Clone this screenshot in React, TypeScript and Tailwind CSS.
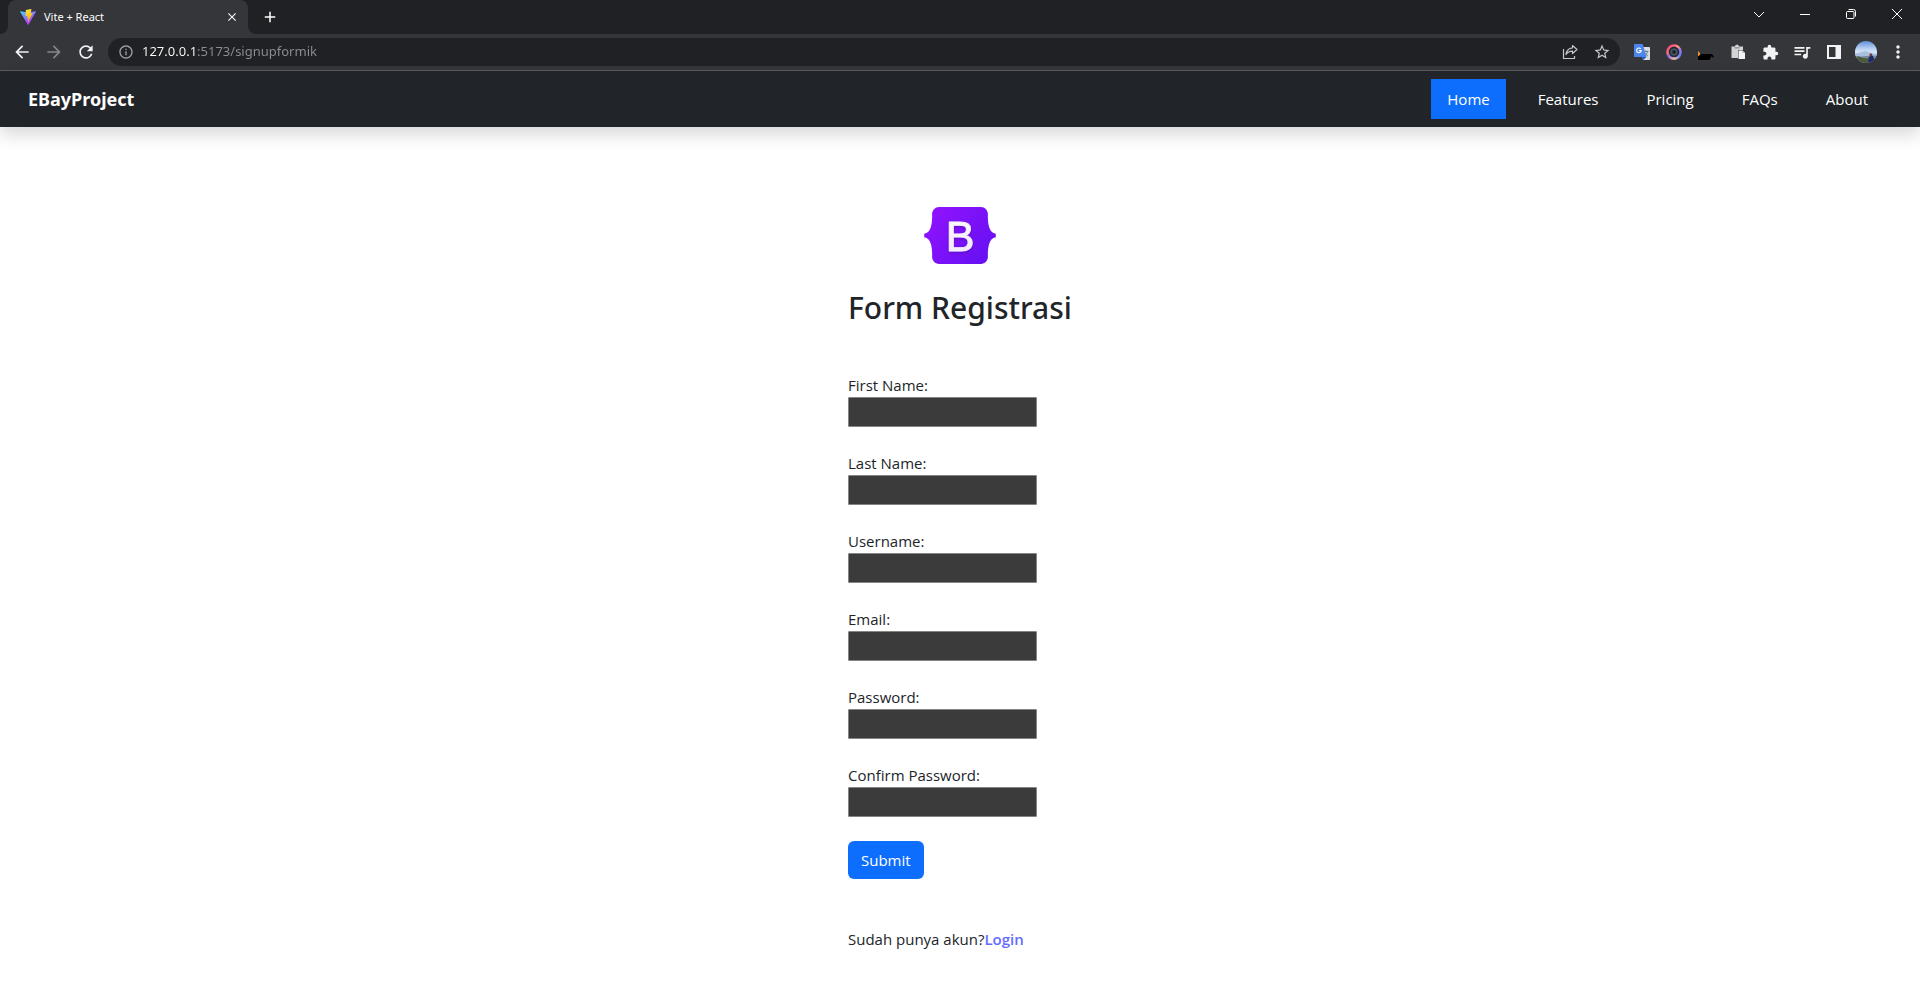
import type { ReactNode } from "react";
import {
  MdAdd,
  MdArrowBack,
  MdArrowForward,
  MdClose,
  MdExtension,
  MdInfoOutline,
  MdMoreVert,
  MdQueueMusic,
  MdRefresh,
  MdStarBorder,
} from "react-icons/md";

function ViteLogo() {
  return (
    <svg viewBox="0 0 32 32" className="size-4 shrink-0" aria-hidden="true">
      <defs>
        <linearGradient id="vite-a" x1="0" y1="0.05" x2="0.6" y2="0.9">
          <stop offset="0" stopColor="#41d1ff" />
          <stop offset="1" stopColor="#bd34fe" />
        </linearGradient>
        <linearGradient id="vite-b" x1="0.4" y1="0" x2="0.6" y2="1">
          <stop offset="0" stopColor="#ffea83" />
          <stop offset="0.1" stopColor="#ffdd35" />
          <stop offset="1" stopColor="#ffa800" />
        </linearGradient>
      </defs>
      <path d="M31.8 5.5 17 31.6c-.3.5-1 .5-1.3 0L.2 5.5c-.3-.6.2-1.3.8-1.2l15 2.7 15-2.7c.7-.1 1.1.6.8 1.2z" fill="url(#vite-a)" />
      <path d="M22.5 0 12 2.1c-.2 0-.3.2-.3.4l-.7 11.4c0 .3.2.5.5.4l3-.7c.3-.1.5.2.5.5l-.9 4.4c-.1.3.2.5.5.5l1.800-.6c.3-.1.6.2.5.5l-1.400 6.900c-.1.4.5.7.8.3l8.700-17.300c.1-.3-.1-.6-.5-.5l-3 .6c-.3.1-.5-.2-.5-.5l2-6.900c.1-.3-.2-.6-.5-.5z" fill="url(#vite-b)" />
    </svg>
  );
}

function BootstrapLogo() {
  return (
    <svg viewBox="0 0 118 94" className="h-[57px] w-[72px]" role="img" aria-label="Bootstrap">
      <defs>
        <linearGradient id="bs-bg" x1="10" y1="5" x2="108" y2="90" gradientUnits="userSpaceOnUse">
          <stop stopColor="#9013fe" />
          <stop offset="1" stopColor="#6610f2" />
        </linearGradient>
        <linearGradient id="bs-letter" x1="0" y1="0" x2="0" y2="1">
          <stop stopColor="#ffffff" />
          <stop offset="1" stopColor="#f1e5fc" />
        </linearGradient>
        <filter id="bs-shadow" x="-20%" y="-20%" width="140%" height="150%">
          <feDropShadow dx="0" dy="2" stdDeviation="3" floodOpacity="0.2" />
        </filter>
      </defs>
      <path
        fill="url(#bs-bg)"
        d="M24.509 0c-6.733 0-11.715 5.893-11.492 12.284.214 6.14-.064 14.092-2.066 20.577C8.943 39.365 5.547 43.485 0 44.014v5.972c5.547.529 8.943 4.649 10.951 11.153 2.002 6.485 2.28 14.437 2.066 20.577C12.794 88.106 17.776 94 24.51 94H93.5c6.733 0 11.714-5.893 11.491-12.284-.214-6.14.064-14.092 2.066-20.577 2.009-6.504 5.396-10.624 10.943-11.153v-5.972c-5.547-.529-8.934-4.649-10.943-11.153-2.002-6.484-2.28-14.437-2.066-20.577C105.214 5.894 100.233 0 93.5 0H24.508z"
      />
      <text x="59" y="72.500" textAnchor="middle" fontFamily="Liberation Sans, sans-serif" fontWeight="400" fontSize="71" stroke="#f8f2fe" strokeWidth="1.500" fill="url(#bs-letter)" filter="url(#bs-shadow)">
        B
      </text>
    </svg>
  );
}

function ShareIcon() {
  return (
    <svg viewBox="0 0 16 16" className="size-4" fill="none" stroke="currentColor" strokeWidth="1.2" aria-hidden="true">
      <path d="M1.500 5v9.500h11V12" />
      <path d="M10.500 1.500 15 5.500l-4.500 4V7.200C7.500 7.200 5.500 8.200 4 10.500 4.500 6.500 7 4.200 10.500 3.800z" strokeLinejoin="round" />
    </svg>
  );
}

function TranslateIcon() {
  return (
    <svg viewBox="0 0 16 16" className="size-4" aria-hidden="true">
      <path d="M6 3h9.300c.4 0 .7.3.7.7v11.600c0 .4-.3.7-.7.7H9z" fill="#dadce0" />
      <path d="M9.500 7.500h5M12 6.200v1.300M13.600 7.500c-.4 2-1.700 3.500-3.300 4.500M10.800 8.800c.6 1.400 1.800 2.500 3.200 3.300" stroke="#5f7886" strokeWidth="0.9" fill="none" />
      <path d="M.7 0h8l3.800 13H.7a.7.7 0 0 1-.7-.7V.7C0 .3.300 0 .7 0z" fill="#4a86ee" />
      <path d="M12.500 13 9 16l-.8-3z" fill="#1a56c4" />
      <path d="M6.700 4.900a2.300 2.300 0 1 0 .5 1.700H4.900" stroke="#fff" strokeWidth="1.100" fill="none" />
    </svg>
  );
}

function LensIcon() {
  return (
    <svg viewBox="0 0 16 16" className="size-4" aria-hidden="true">
      <defs>
        <linearGradient id="lens" x1="0" y1="0" x2="1" y2="1">
          <stop offset="0" stopColor="#ff2e84" />
          <stop offset="0.45" stopColor="#ff9a7a" />
          <stop offset="0.6" stopColor="#b07bf0" />
          <stop offset="1" stopColor="#4f7dff" />
        </linearGradient>
        <linearGradient id="lens-low" x1="0" y1="0" x2="1" y2="0">
          <stop offset="0" stopColor="#7d5cff" />
          <stop offset="0.5" stopColor="#ffc08a" />
          <stop offset="1" stopColor="#5b7cff" />
        </linearGradient>
      </defs>
      <circle cx="8" cy="8" r="6.600" fill="#26292f" stroke="url(#lens)" strokeWidth="2.400" />
      <path d="M1.800 10.300a6.600 6.600 0 0 0 12.400 0" fill="none" stroke="url(#lens-low)" strokeWidth="2.400" />
      <circle cx="8" cy="8" r="3.200" fill="#33424f" stroke="#5a6a78" strokeWidth="0.800" />
      <circle cx="8" cy="8" r="1.300" fill="#12171c" />
    </svg>
  );
}

function CatIcon() {
  return (
    <svg viewBox="0 0 16 16" className="size-4" aria-hidden="true">
      <path d="M0 7l1.500 1.500L3 12l-3 3z" fill="#f0932b" />
      <path d="M0 12.500 3 10h10c1.500 0 2.500 1.500 3 3.500l-1 .3c-.5-1-1-1.500-1.800-1.300L11.500 16H0z" fill="#000" />
    </svg>
  );
}

function PasteIcon() {
  return (
    <svg viewBox="0 0 16 16" className="size-4" aria-hidden="true">
      <path d="M1.500 2.500H5C5.200 1.200 5.900.8 7 .8s1.800.4 2 1.700h4V6H8v8H1.500z" fill="#d3d4d6" />
      <path d="M4.500 3.200h5v1.300h-5z" fill="#8b8c90" />
      <path d="M8.500 6.500h4l2.500 2.500v6H8.500z" fill="#f1f3f4" />
      <path d="M12.500 6.500V9H15z" fill="#b5b6b9" />
    </svg>
  );
}

function PanelIcon() {
  return (
    <svg viewBox="0 0 14 14" className="size-3.5" aria-hidden="true">
      <path fillRule="evenodd" d="M0 0h14v14H0zM2 2v10h6.500V2z" fill="#f1f3f4" />
    </svg>
  );
}

function Avatar() {
  return (
    <svg viewBox="0 0 22 22" className="size-[22px]" aria-hidden="true">
      <defs>
        <clipPath id="avatar-clip">
          <circle cx="11" cy="11" r="11" />
        </clipPath>
        <linearGradient id="avatar-sky" x1="0" y1="0" x2="0" y2="1">
          <stop offset="0" stopColor="#5f8fdc" />
          <stop offset="0.35" stopColor="#b9d2f3" />
          <stop offset="0.6" stopColor="#e6eef8" />
          <stop offset="1" stopColor="#8fa6c4" />
        </linearGradient>
      </defs>
      <g clipPath="url(#avatar-clip)">
        <path d="M0 0h22v22H0z" fill="url(#avatar-sky)" />
        <path d="M0 12.500l5-1 5-1.500 5 1.500 7 1.500v4H0z" fill="#a9c0df" />
        <path d="M0 15l6 .5 6-.5 10-.5v8H0z" fill="#75879a" />
        <path d="M0 16l4-.5 4 1.500 5 .5v5H0z" fill="#4b5b3a" />
        <path d="M13 22l.5-5 2-3 2 .5 1.500 3 1 4.500z" fill="#1e2a63" />
        <circle cx="15.800" cy="14" r="1.400" fill="#6b3a35" />
      </g>
    </svg>
  );
}

function TabFlare({ side }: { side: "left" | "right" }) {
  return (
    <svg viewBox="0 0 8 8" className="size-2 self-end" aria-hidden="true">
      <path d={side === "left" ? "M8 0v8H0a8 8 0 0 0 8-8z" : "M0 0v8h8a8 8 0 0 1-8-8z"} fill="#35363a" />
    </svg>
  );
}

function IconButton({ label, children }: { label: string; children: ReactNode }) {
  return (
    <button type="button" aria-label={label} className="flex h-7 w-8 shrink-0 items-center justify-center">
      {children}
    </button>
  );
}

function WindowButton({ label, path }: { label: string; path: string }) {
  return (
    <button type="button" aria-label={label} className="flex h-7 w-[46px] items-center justify-center text-white">
      <svg viewBox="0 0 10 10" className="size-2.5 overflow-visible" fill="none" stroke="currentColor" strokeWidth="1" aria-hidden="true">
        <path d={path} />
      </svg>
    </button>
  );
}

function BrowserChrome() {
  return (
    <header className="font-['Noto_Sans','Open_Sans',sans-serif]">
      <div className="flex h-[34px] items-start bg-[#202124]">
        <TabFlare side="left" />
        <div className="flex h-full w-60 items-center rounded-t-lg bg-[#35363a] pr-2 pl-3">
          <ViteLogo />
          <span className="ml-2 flex-1 text-[11px] text-white">Vite + React</span>
          <button type="button" aria-label="Close tab" className="flex size-4 items-center justify-center text-[#f1f3f4]">
            <MdClose className="size-3.5" />
          </button>
        </div>
        <TabFlare side="right" />
        <button type="button" aria-label="New tab" className="flex h-full w-7 items-center justify-center text-white">
          <MdAdd className="size-[18px]" />
        </button>
        <div className="ml-auto flex">
          <WindowButton label="Search tabs" path="M0 3l5 5 5-5" />
          <WindowButton label="Minimize" path="M0 5.500h10" />
          <WindowButton label="Restore" path="M1.500 2.500h5.500a1 1 0 0 1 1 1v5a1 1 0 0 1-1 1h-5.500a1 1 0 0 1-1-1v-5a1 1 0 0 1 1-1zM2.500.5h5a2 2 0 0 1 2 2v5" />
          <WindowButton label="Close window" path="M0 0l10 10M10 0L0 10" />
        </div>
      </div>

      <div className="flex items-center border-b border-[#5b5c60] bg-[#35363a] px-1.5 py-1 text-[#f1f3f4]">
        <IconButton label="Back"><MdArrowBack className="size-5" /></IconButton>
        <IconButton label="Forward"><MdArrowForward className="size-5 text-[#85868a]" /></IconButton>
        <IconButton label="Reload"><MdRefresh className="size-5" /></IconButton>
        <div className="mx-1.5 flex h-7 flex-1 items-center rounded-full bg-[#202124] pr-0.5 pl-2.5">
          <MdInfoOutline className="size-4 shrink-0 text-[#9aa0a6]" />
          <input
            aria-label="Address"
            defaultValue="127.0.0.1:5173/signupformik"
            className="ml-2 min-w-0 flex-1 bg-[linear-gradient(to_right,#ffffff_54px,#8b8e92_54px)] bg-clip-text text-[13px] text-transparent outline-none"
          />
          <div className="flex text-[#c4c7ca]">
            <IconButton label="Share"><ShareIcon /></IconButton>
            <IconButton label="Bookmark"><MdStarBorder className="size-[18px]" /></IconButton>
          </div>
        </div>
        <IconButton label="Translate"><TranslateIcon /></IconButton>
        <IconButton label="Screen capture"><LensIcon /></IconButton>
        <IconButton label="Cat extension"><CatIcon /></IconButton>
        <IconButton label="Clipboard"><PasteIcon /></IconButton>
        <IconButton label="Extensions"><MdExtension className="size-[17px]" /></IconButton>
        <IconButton label="Media"><MdQueueMusic className="size-5" /></IconButton>
        <IconButton label="Side panel"><PanelIcon /></IconButton>
        <IconButton label="Profile"><Avatar /></IconButton>
        <IconButton label="Menu"><MdMoreVert className="size-5" /></IconButton>
      </div>
    </header>
  );
}

const links = ["Home", "Features", "Pricing", "FAQs", "About"];

const fields = [
  { id: "firstName", label: "First Name:", type: "text" },
  { id: "lastName", label: "Last Name:", type: "text" },
  { id: "username", label: "Username:", type: "text" },
  { id: "email", label: "Email:", type: "email" },
  { id: "password", label: "Password:", type: "password" },
  { id: "confirmPassword", label: "Confirm Password:", type: "password" },
];

export default function App() {
  return (
    <div className="min-h-screen bg-white">
      <BrowserChrome />

      <nav className="flex items-center justify-between bg-[#212529] py-2 pr-9 pl-7 font-['Open_Sans','Noto_Sans',sans-serif] text-white shadow-[0_8px_16px_rgba(0,0,0,0.15)]">
        <a href="#" className="font-['Noto_Sans','Open_Sans',sans-serif] text-[18px] font-bold">EBayProject</a>
        <ul className="flex gap-4 text-[15px] leading-6">
          {links.map((link) => (
            <li key={link}>
              <a href="#" className={link === "Home" ? "block bg-[#0d6efd] px-4 py-2" : "block px-4 py-2"}>
                {link}
              </a>
            </li>
          ))}
        </ul>
      </nav>

      <main className="mx-auto w-56 pt-20 pb-6 font-['Open_Sans','Noto_Sans',sans-serif] text-[15px] leading-6 text-[#212529]">
        <div className="flex justify-center">
          <BootstrapLogo />
        </div>
        <h1 className="mt-6 font-['Noto_Sans','Open_Sans',sans-serif] text-[30px] leading-10 font-medium whitespace-nowrap">Form Registrasi</h1>

        <form className="mt-[45px] flex flex-col items-start gap-6" onSubmit={(event) => event.preventDefault()}>
          {fields.map((field) => (
            <div key={field.id}>
              <label htmlFor={field.id} className="block">{field.label}</label>
              <input
                id={field.id}
                type={field.type}
                className="block h-[30px] w-[189px] rounded-[1px] border border-[#858585] bg-[#3b3b3b] px-0.5 text-white"
              />
            </div>
          ))}
          <button type="submit" className="rounded-md bg-[#0d6efd] px-[13px] py-[7px] text-white">Submit</button>
        </form>

        <p className="mt-12 whitespace-nowrap">
          Sudah punya akun?
          <a href="#" className="font-semibold text-[#646cff]">Login</a>
        </p>
      </main>
    </div>
  );
}
